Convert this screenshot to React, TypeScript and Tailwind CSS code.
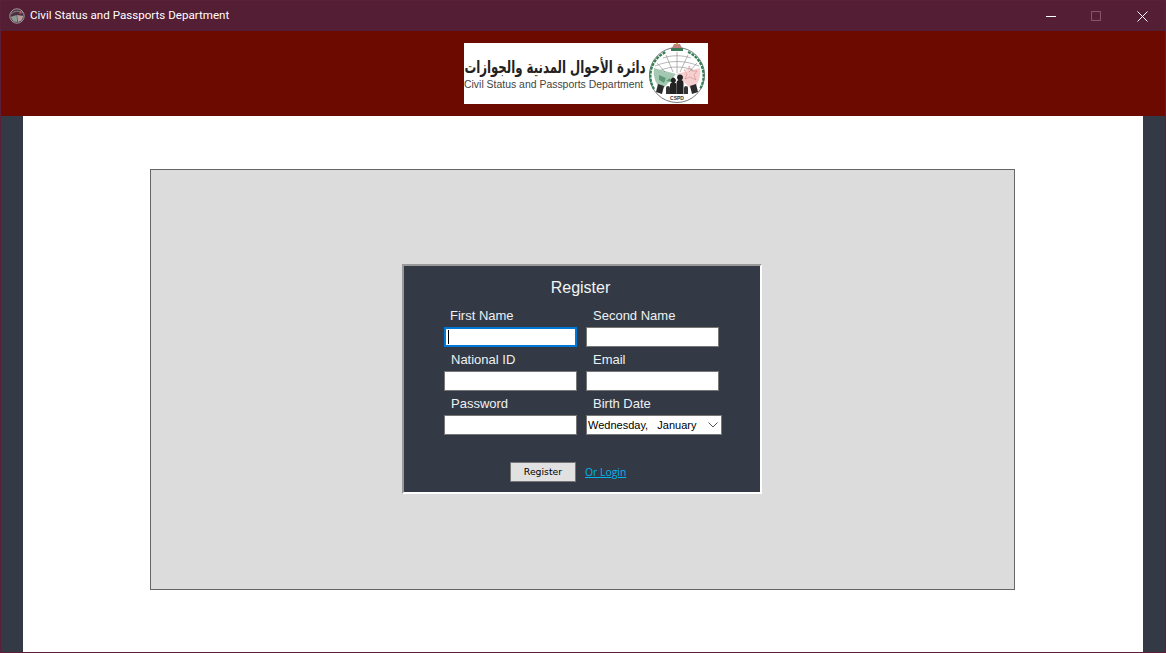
const fields = [
  { label: "First Name", pad: "pl-[6px]", focused: true },
  { label: "Second Name", pad: "pl-[7px]" },
  { label: "National ID", pad: "pl-[7px]" },
  { label: "Email", pad: "pl-[7px]" },
  { label: "Password", pad: "pl-[7px]", type: "password" },
];

function AppIcon() {
  return (
    <svg width="16" height="16" viewBox="0 0 16 16" fill="none">
      <circle cx="8" cy="8" r="7.200" fill="#4a3040" stroke="#a39a9d" strokeWidth="1" />
      <path d="M2 6c3-3 8-4 12-1" stroke="#8f8a8c" strokeWidth="1" />
      <path d="M1.500 9l6-2 1 7-4-.5z" fill="#8a9a90" />
      <path d="M8 7l6.500 1-2 4.500-3.500 1.500z" fill="#b79a9c" />
      <path d="M11 3l2 2-3 1z" fill="#c9545c" />
    </svg>
  );
}

function Emblem() {
  return (
    <svg width="62" height="61" viewBox="0 0 62 61" fill="none" className="shrink-0">
      <circle cx="31" cy="32" r="27.500" fill="#fff" stroke="#555" strokeWidth="0.8" />
      {/* green arcs either side, the bottom of the ring stays plain */}
      <path d="M8 46A26 26 0 0 1 20 9" stroke="#2f7f50" strokeWidth="2.200" strokeDasharray="3 1" />
      <path d="M42 9A26 26 0 0 1 54 46" stroke="#2f7f50" strokeWidth="2.200" strokeDasharray="3 1" />
      <path d="M8 25L30 31 16 47A23 23 0 0 1 8 25z" fill="#a5c8b3" />
      <path d="M54 25L30 31 46 47A23 23 0 0 0 54 25z" fill="#f5d0d0" />
      <path
        d="M11 20l8 9M20 12l7 17M31 9v21M42 12l-8 17M51 20l-8 9M9 23c14-6 30-6 44 0M15 27c10-4 22-4 32 0M17 15c8-3 20-3 28 0"
        stroke="#888"
        strokeWidth="0.6"
      />
      <path d="M43 23l3 5 5 0-3 4 2 5-6-3-5 2 2-5-3-4 5 0z" stroke="#d98a8a" strokeWidth="0.6" />
      <path d="M13 32l7 3-2 5-5-3zM20 38l4-3 1 4z" fill="#5f9a78" />
      <path d="M25 5h12v3H25z" fill="#3c7a55" />
      <path d="M28 1h6l2 4h-10z" fill="#c08080" />
      <path d="M30 0h2v2h-2z" fill="#caa24a" />
      {/* family */}
      <path d="M24 51v-9a2.500 2.500 0 0 1 2-2.500 2.500 2.500 0 1 1 2.500 0 2.500 2.500 0 0 1 2 2.500v9z" fill="#222" />
      <path d="M30.500 51v-11a3 3 0 0 1 2-3 3 3 0 1 1 3 0 3 3 0 0 1 2 3v11z" fill="#222" />
      <path d="M20 51v-6a2 2 0 1 1 4 0v6zM38 51v-6a2 2 0 1 1 4 0v6z" fill="#333" />
      <path d="M12 41l6 2-2 8-6-2zM44 43l6-2 2 8-6 2z" fill="#2b2b2b" />
      <text
        x="31"
        y="57"
        textAnchor="middle"
        fontSize="5"
        fontWeight="700"
        fontFamily="'Liberation Sans', sans-serif"
        fill="#333"
      >
        CSPD
      </text>
    </svg>
  );
}

function Logo() {
  return (
    <div className="flex h-[61px] w-[244px] items-center justify-between overflow-hidden bg-white">
      <div className="flex w-[182px] flex-col">
        <div
          dir="rtl"
          className="flex h-[22px] scale-x-[0.69] justify-center whitespace-nowrap font-['DejaVu_Sans',sans-serif] text-[17px] leading-[22px] font-bold text-[#222]"
        >
          دائرة الأحوال المدنية والجوازات
        </div>
        <div className="h-[14px] whitespace-nowrap font-['Liberation_Sans',sans-serif] text-[10.450px] leading-[14px] text-[#444]">
          Civil Status and Passports Department
        </div>
      </div>
      <Emblem />
    </div>
  );
}

function TitleBar() {
  return (
    <div className="flex h-[30px] shrink-0 items-center bg-[#541e35] pl-[8px] font-['Roboto',sans-serif] text-[11.600px] text-white">
      <AppIcon />
      <span className="ml-[5px] flex-1">Civil Status and Passports Department</span>
      <div className="flex h-full">
        <button className="flex w-[45px] items-center justify-center">
          <svg width="10" height="10" viewBox="0 0 10 10">
            <path d="M0 5.500h10" stroke="#fff" strokeWidth="1" />
          </svg>
        </button>
        <button className="flex w-[46px] items-center justify-center">
          <svg width="10" height="10" viewBox="0 0 10 10" fill="none">
            <path d="M.5.500h9v9h-9z" stroke="#86586c" strokeWidth="1" />
          </svg>
        </button>
        <button className="flex w-[46px] items-center justify-center">
          <svg width="11" height="11" viewBox="0 0 11 11" fill="none">
            <path d="M.5.500l10 10M10.500.500l-10 10" stroke="#fff" strokeWidth="1" />
          </svg>
        </button>
      </div>
    </div>
  );
}

function Field({ label, pad, focused, type }: { label: string; pad: string; focused?: boolean; type?: string }) {
  return (
    <div className="flex flex-col">
      <label className={`h-[24px] text-[13px] leading-[26px] text-[#eef1f4] ${pad}`}>{label}</label>
      <div className="relative">
        <input
          type={type ?? "text"}
          className={`block h-[20px] w-[133px] bg-white outline-none ${focused ? "border-2 border-[#0078d7]" : "border border-[#767676]"}`}
        />
        {focused && <span className="absolute top-[3px] left-[4px] h-[14px] w-[1px] bg-black" />}
      </div>
    </div>
  );
}

export default function App() {
  return (
    <div className="flex h-[653px] w-[1166px] flex-col overflow-hidden border border-[#5a2039] bg-[#333a45] font-['Liberation_Sans',sans-serif]">
      <TitleBar />
      <div className="flex h-[85px] shrink-0 items-center justify-center bg-[#6c0a00] pl-[6px]">
        <Logo />
      </div>
      <div className="flex flex-1 px-[22px]">
        <main className="flex-1 bg-white pt-[53px] pl-[127px]">
          <div className="flex h-[421px] w-[865px] items-center justify-center border border-[#666] bg-[#dcdcdc] pr-[1px] pb-[1px]">
            <div className="h-[230px] w-[360px] border-2 border-t-[#999] border-r-white border-b-white border-l-[#999] bg-[#333a45]">
              <h1 className="mt-[11px] mb-[4px] h-[22px] pr-[3px] text-center text-[16px] leading-[22px] text-[#f2f4f6]">
                Register
              </h1>
              <div className="grid grid-cols-[133px_133px] gap-x-[9px] pl-[40px]">
                {fields.map(f => (
                  <Field key={f.label} {...f} />
                ))}
                <div className="flex flex-col">
                  <label className="h-[24px] pl-[7px] text-[13px] leading-[26px] text-[#eef1f4]">Birth Date</label>
                  <div className="flex h-[20px] w-[136px] items-center justify-between border border-[#767676] bg-white pr-[3px] pl-[1px] text-[11px] text-black">
                    <span className="whitespace-pre">Wednesday,   January</span>
                    <svg width="10" height="6" viewBox="0 0 10 6" fill="none">
                      <path d="M.5.500L5 5 9.500.500" stroke="#555" strokeWidth="1" />
                    </svg>
                  </div>
                </div>
              </div>
              <div className="mt-[27px] flex items-center gap-[9px] pl-[106px]">
                <button className="h-[20px] w-[66px] border border-[#767676] bg-[#e1e1e1] font-['DejaVu_Sans',sans-serif] text-[9.300px] text-black">
                  Register
                </button>
                <a href="#" className="pt-[1px] font-['Open_Sans',sans-serif] text-[10.400px] text-[#00b4f0] underline">
                  Or Login
                </a>
              </div>
            </div>
          </div>
        </main>
      </div>
    </div>
  );
}
